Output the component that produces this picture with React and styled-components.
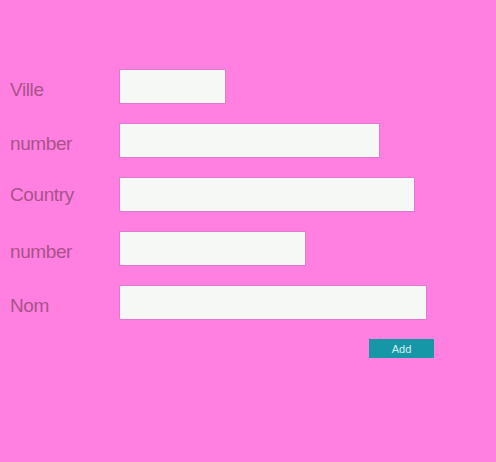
import React from 'react';
import styled, { createGlobalStyle } from 'styled-components';

const GlobalStyle = createGlobalStyle`
  html, body {
    margin: 0;
    padding: 0;
    background: #ff80e0;
  }
  body {
    font-family: "Liberation Sans", Arial, sans-serif;
  }
`

const Page = styled.div`
  width: 496px;
  height: 462px;
  background: #ff80e0;
  padding-top: 69px;
  box-sizing: border-box;
`

const Form = styled.form`
  display: flex;
  flex-direction: column;
  gap: 19px;
`

const Row = styled.div`
  display: flex;
  align-items: center;
  height: 35px;
`

const Label = styled.label`
  width: 119px;
  flex-shrink: 0;
  padding-left: 10px;
  box-sizing: border-box;
  font-size: 19px;
  letter-spacing: -0.4px;
  color: #a9528a;
  padding-top: ${p => p.$drop ?? 6}px;
`

const Input = styled.input`
  width: ${p => p.$w}px;
  height: 35px;
  box-sizing: border-box;
  margin: 0;
  border: 1px solid #e07ad0;
  border-radius: ${p => p.$round ? 2 : 0}px;
  background: #f6f8f6;
  outline: none;
`

const Actions = styled.div`
  display: flex;
  padding-left: 369px;
`

const AddButton = styled.button`
  width: 65px;
  height: 19px;
  margin: 0;
  padding: 0;
  border: none;
  background: #1597a8;
  color: #d6eeee;
  font-family: "Liberation Sans", Arial, sans-serif;
  font-size: 11px;
  cursor: pointer;
`

const fields = [
  { label: 'Ville', w: 107 },
  { label: 'number', w: 261 },
  { label: 'Country', w: 296, drop: 0 },
  { label: 'number', w: 187 },
  { label: 'Nom', w: 308, round: true },
]

const App = () => {
  return (
    <>
      <GlobalStyle />
      <Page>
        <Form onSubmit={e => e.preventDefault()}>
          {fields.map((f, i) => (
            <Row key={i}>
              <Label htmlFor={'f' + i} $drop={f.drop}>{f.label}</Label>
              <Input id={'f' + i} $w={f.w} $round={f.round} />
            </Row>
          ))}
          <Actions>
            <AddButton type="submit">Add</AddButton>
          </Actions>
        </Form>
      </Page>
    </>
  )
}

export default App;
